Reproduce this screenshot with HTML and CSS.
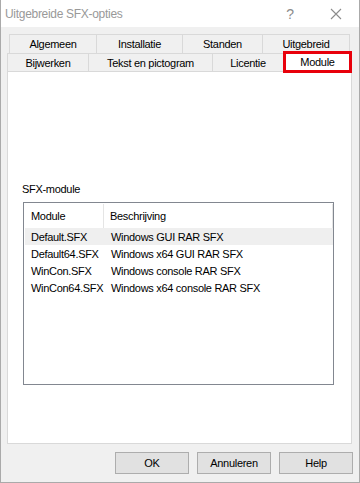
FILE: index.html
```html
<!DOCTYPE html>
<html>
<head>
<meta charset="utf-8">
<link rel="stylesheet" href="styles.css">
</head>
<body>
<div class="window">
  <div class="titlebar">
    <span class="title">Uitgebreide SFX-opties</span>
    <span class="tb-help">?</span>
    <span class="tb-close">
      <svg width="12" height="12" viewBox="0 0 12 12"><path d="M1 1L11 11M11 1L1 11" stroke="#8c8c8c" stroke-width="1.1" fill="none"/></svg>
    </span>
  </div>
  <div class="tabs">
    <div class="tabrow row1">
      <div class="tab w-alg">Algemeen</div>
      <div class="tab w-ins">Installatie</div>
      <div class="tab w-sta">Standen</div>
      <div class="tab w-uit">Uitgebreid</div>
    </div>
    <div class="tabrow row2">
      <div class="tab w-bij">Bijwerken</div>
      <div class="tab w-tek">Tekst en pictogram</div>
      <div class="tab w-lic">Licentie</div>
      <div class="tab active w-mod">Module</div>
    </div>
  </div>
  <div class="panel">
    <div class="group-label">SFX-module</div>
    <div class="listbox">
      <div class="lv-header">
        <div class="col c1">Module</div>
        <div class="col c2">Beschrijving</div>
      </div>
      <div class="lv-row sel"><div class="col c1">Default.SFX</div><div class="col c2">Windows GUI RAR SFX</div></div>
      <div class="lv-row"><div class="col c1">Default64.SFX</div><div class="col c2">Windows x64 GUI RAR SFX</div></div>
      <div class="lv-row"><div class="col c1">WinCon.SFX</div><div class="col c2">Windows console RAR SFX</div></div>
      <div class="lv-row"><div class="col c1">WinCon64.SFX</div><div class="col c2">Windows x64 console RAR SFX</div></div>
    </div>
  </div>
  <div class="buttons">
    <button class="btn">OK</button>
    <button class="btn">Annuleren</button>
    <button class="btn">Help</button>
  </div>
</div>
</body>
</html>
```
FILE: styles.css
```css
* { box-sizing: border-box; }
html, body { margin: 0; padding: 0; }
body {
  width: 360px;
  height: 483px;
  font-family: "Liberation Sans", Arial, sans-serif;
  font-size: 11px;
  letter-spacing: -0.3px;
  color: #000;
  background: #fff;
}
.window {
  width: 360px;
  height: 483px;
  border: 1px solid #aaaaaa;
  border-top: none;
  background: #f0f0f0;
  display: flex;
  flex-direction: column;
}
.titlebar {
  height: 27px;
  background: #fff;
  display: flex;
  align-items: center;
  padding-left: 4px;
  color: #999999;
}
.title { flex: 1; font-size: 12px; }
.tb-help { width: 20px; font-size: 14px; color: #8c8c8c; margin-right: 30px; text-align: center; }
.tb-close { width: 12px; margin-right: 17px; display: flex; }
.tabs { padding-top: 7px; }
.tabrow { display: flex; }
.row1 { margin-left: 8px; height: 19px; }
.row2 { margin-left: 6px; height: 18px; }
.tab {
  border: 1px solid #d9d9d9;
  border-bottom: none;
  background: #f0f0f0;
  display: flex;
  align-items: center;
  justify-content: center;
  margin-right: -1px;
  white-space: nowrap;
}
.w-alg { width: 88px; }
.w-ins { width: 87px; }
.w-sta { width: 81px; }
.w-uit { width: 88px; }
.w-bij { width: 82px; }
.w-tek { width: 125px; }
.w-lic { width: 72px; }
.w-mod {
  width: 69px;
  height: 22px;
  margin-top: -2px;
  background: #fff;
  border: 3px solid #e8000b;
  position: relative;
  z-index: 2;
}
.panel {
  margin: 0 7px 0 6px;
  height: 373px;
  background: #fff;
  border: 1px solid #d9d9d9;
  padding: 110px 0 0 14px;
}
.group-label { line-height: 14px; margin-bottom: 6px; }
.listbox {
  margin-left: 1px;
  width: 311px;
  height: 183px;
  border: 1px solid #828790;
  padding: 1px 1px 0 1px;
}
.lv-header {
  display: flex;
  height: 24px;
  align-items: center;
  width: 308px;
  border-right: 1px solid #e5e5e5;
}
.lv-row {
  display: flex;
  height: 17px;
  align-items: center;
  width: 308px;
}
.lv-row.sel { background: #efefef; }
.col { white-space: nowrap; }
.c1 { width: 79px; padding-left: 6px; }
.c2 { padding-left: 7px; }
.lv-header .c1 { border-right: 1px solid #e5e5e5; height: 24px; display: flex; align-items: center; }
.lv-header .c2 { padding-left: 6px; }
.buttons {
  display: flex;
  justify-content: flex-end;
  gap: 8px;
  padding: 8px 6px 0 0;
}
.btn {
  width: 74px;
  height: 22px;
  background: #e1e1e1;
  border: 1px solid #adadad;
  font-family: inherit;
  font-size: 11px;
  letter-spacing: -0.3px;
  color: #000;
  padding: 0;
}
```
